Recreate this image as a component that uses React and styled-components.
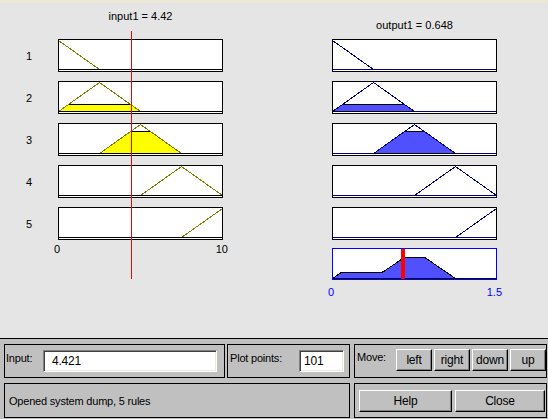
import React from 'react';
import styled, { createGlobalStyle } from 'styled-components';

const GlobalStyle = createGlobalStyle`
  html, body {
    margin: 0;
    padding: 0;
    background: #e5e5e5;
  }
  body {
    font-family: "Liberation Sans", Arial, sans-serif;
  }
`;

const BOX_W = 165;
const BOX_H = 33;
const INPUT = 4.421;
const OUTPUT = 0.648;

const IN_RANGE = [0, 10];
const OUT_RANGE = [0, 1.5];
const IN_MFS = [
  [-2.5, 0, 2.5],
  [0, 2.5, 5],
  [2.5, 5, 7.5],
  [5, 7.5, 10],
  [7.5, 10, 12.5],
];
const OUT_MFS = IN_MFS.map((mf) => mf.map((v) => v * 0.15));

const tri = ([a, b, c], x) => {
  if (x <= a || x >= c) return 0;
  return x < b ? (x - a) / (b - a) : (c - x) / (c - b);
};

const degrees = IN_MFS.map((mf) => tri(mf, INPUT));

const toX = (v, [lo, hi]) => 0.5 + ((v - lo) / (hi - lo)) * (BOX_W - 1);

const sample = (fn, from, to, range, toY, n = 120) => {
  const pts = [];
  for (let i = 0; i <= n; i++) {
    const v = from + ((to - from) * i) / n;
    pts.push(`${toX(v, range).toFixed(1)},${toY(fn(v)).toFixed(1)}`);
  }
  return pts;
};

// ---------- upper plot area ----------

const Window = styled.div`
  width: 548px;
  height: 419px;
  overflow: hidden;
  display: flex;
  flex-direction: column;
  background: #e5e5e5;
`;

const TopEdge = styled.div`
  height: 3px;
  flex: none;
  background: #ece9d8;
`;

const PlotArea = styled.div`
  height: 335px;
  flex: none;
  display: flex;
`;

const LabelColumn = styled.div`
  width: 58px;
  padding-top: 36px;
  display: flex;
  flex-direction: column;
  gap: 9px;
`;

const RowLabel = styled.div`
  height: ${BOX_H}px;
  display: flex;
  align-items: center;
  justify-content: center;
  font-size: 11px;
  color: #000;
`;

const VarColumn = styled.div`
  width: ${BOX_W}px;
  margin-left: ${(p) => p.$offset || 0}px;
  position: relative;
  display: flex;
  flex-direction: column;
`;

const VarTitle = styled.div`
  height: 36px;
  box-sizing: border-box;
  padding-top: ${(p) => p.$top}px;
  text-align: center;
  font-size: 11px;
  line-height: 14px;
  color: #000;
  white-space: nowrap;
`;

const BoxStack = styled.div`
  display: flex;
  flex-direction: column;
  gap: 9px;
`;

const AggregateWrap = styled.div`
  margin-top: 8px;
  height: 32px;
`;

const Axis = styled.div`
  display: flex;
  justify-content: space-between;
  margin: ${(p) => p.$top}px -5px 0 -4px;
  font-size: 11px;
  line-height: 14px;
  color: ${(p) => p.$color};
`;

const Cursor = styled.div`
  position: absolute;
  top: 28px;
  width: 1px;
  height: 248px;
  background: #ff0000;
`;

const PlotSvg = styled.svg`
  display: block;
  background: #fff;
  shape-rendering: crispEdges;
`;

function MfBox({ mf, range, degree, line, fill, baseline }) {
  const toY = (mu) => BOX_H - 2.5 - mu * (BOX_H - 4);
  const from = Math.max(mf[0], range[0]);
  const to = Math.min(mf[2], range[1]);
  const curve = sample((v) => tri(mf, v), from, to, range, toY);
  const clipped = degree > 0
    ? [
        `${toX(from, range).toFixed(1)},${toY(0)}`,
        ...sample((v) => Math.min(tri(mf, v), degree), from, to, range, toY),
        `${toX(to, range).toFixed(1)},${toY(0)}`,
      ]
    : null;
  return (
    <PlotSvg width={BOX_W} height={BOX_H}>
      <line x1="0" x2={BOX_W} y1={toY(0)} y2={toY(0)} stroke={baseline} />
      {clipped && <polygon points={clipped.join(' ')} fill={fill} stroke="#000" />}
      <polyline points={curve.join(' ')} fill="none" stroke={line} />
      {baseline === '#000' && (
        <line x1="0" x2={BOX_W} y1={toY(0)} y2={toY(0)} stroke="#000" />
      )}
      <rect x="0.5" y="0.5" width={BOX_W - 1} height={BOX_H - 1} fill="none" stroke="#000" />
    </PlotSvg>
  );
}

function AggregateBox() {
  const h = 32;
  const toY = (mu) => 30.5 - mu * 28;
  const agg = (v) =>
    Math.max(...OUT_MFS.map((mf, i) => Math.min(tri(mf, v), degrees[i])));
  const pts = [
    `0.5,${toY(0)}`,
    ...sample(agg, OUT_RANGE[0], OUT_RANGE[1], OUT_RANGE, toY, 164),
    `${BOX_W - 0.5},${toY(0)}`,
  ];
  const barX = toX(OUTPUT, OUT_RANGE);
  return (
    <PlotSvg width={BOX_W} height={h}>
      <polygon points={pts.join(' ')} fill="#5050ff" stroke="#000" />
      <line x1="0" x2={BOX_W} y1={toY(0)} y2={toY(0)} stroke="#000" />
      <rect x={Math.round(barX) - 2} y="0" width="4" height={h} fill="#ff0000" />
      <rect x="0.5" y="0.5" width={BOX_W - 1} height={h - 1} fill="none" stroke="#0000ff" />
    </PlotSvg>
  );
}

// ---------- lower control area ----------

const ControlArea = styled.div`
  flex: 1;
  background: #c0c0c0;
  border-top: 1px solid #000;
  box-sizing: border-box;
  padding: 5px 0 0 4px;
  display: flex;
  gap: 4px;
  font-size: 11px;
  letter-spacing: -0.2px;
  color: #000;
`;

const ControlColumn = styled.div`
  width: ${(p) => p.$w}px;
  display: flex;
  flex-direction: column;
  gap: 5px;
`;

const PanelRow = styled.div`
  display: flex;
  gap: 2px;
`;

const Panel = styled.div`
  width: ${(p) => p.$w}px;
  height: ${(p) => p.$h}px;
  box-sizing: border-box;
  border: 1px solid #000;
  padding: ${(p) => p.$pad};
  display: grid;
  grid-template-columns: ${(p) => p.$cols || '1fr'};
  column-gap: ${(p) => p.$gap || 0}px;
  align-items: start;
`;

const StatusPanel = styled.div`
  width: 346px;
  height: 35px;
  box-sizing: border-box;
  border: 1px solid #000;
  padding-left: 4px;
  display: flex;
  align-items: center;
`;

const FieldLabel = styled.span`
  margin-top: 1px;
  line-height: 14px;
  white-space: nowrap;
`;

const Edit = styled.div`
  height: 22px;
  box-sizing: border-box;
  background: #fff;
  border: 1px solid;
  border-color: #808080 #fff #fff #808080;
  box-shadow: inset 1px 1px 0 #404040, inset -1px -1px 0 #ece9d8;
  padding-left: ${(p) => p.$pad}px;
  display: flex;
  align-items: center;
  font-size: 12px;
`;

const Button = styled.button`
  height: 22px;
  box-sizing: border-box;
  padding: 0;
  background: #c0c0c0;
  border: 1px solid;
  border-color: #fff #000 #000 #fff;
  box-shadow: inset -1px -1px 0 #808080;
  font-family: inherit;
  font-size: 12px;
  letter-spacing: -0.2px;
  color: #000;
  cursor: pointer;
`;

export default function App() {
  return (
    <Window>
      <GlobalStyle />
      <TopEdge />
      <PlotArea>
        <LabelColumn>
          {IN_MFS.map((_, i) => (
            <RowLabel key={i}>{i + 1}</RowLabel>
          ))}
        </LabelColumn>

        <VarColumn>
          <VarTitle $top={6}>input1 = 4.42</VarTitle>
          <BoxStack>
            {IN_MFS.map((mf, i) => (
              <MfBox
                key={i}
                mf={mf}
                range={IN_RANGE}
                degree={degrees[i]}
                line="#808000"
                fill="#ffff00"
                baseline="#000"
              />
            ))}
          </BoxStack>
          <Axis $top={2} $color="#000">
            <span>0</span>
            <span>10</span>
          </Axis>
          <Cursor style={{ left: Math.floor(toX(INPUT, IN_RANGE)) }} />
        </VarColumn>

        <VarColumn $offset={109}>
          <VarTitle $top={15}>output1 = 0.648</VarTitle>
          <BoxStack>
            {OUT_MFS.map((mf, i) => (
              <MfBox
                key={i}
                mf={mf}
                range={OUT_RANGE}
                degree={degrees[i]}
                line="#000080"
                fill="#5050ff"
                baseline="#000080"
              />
            ))}
          </BoxStack>
          <AggregateWrap>
            <AggregateBox />
          </AggregateWrap>
          <Axis $top={5} $color="#0000ff">
            <span>0</span>
            <span>1.5</span>
          </Axis>
        </VarColumn>
      </PlotArea>

      <ControlArea>
        <ControlColumn $w={346}>
          <PanelRow>
            <Panel $w={221} $h={34} $pad="5px 0 0 1px" $cols="37px 174px">
              <FieldLabel>Input:</FieldLabel>
              <Edit $pad={8}>4.421</Edit>
            </Panel>
            <Panel $w={123} $h={34} $pad="5px 0 0 2px" $cols="69px 45px">
              <FieldLabel>Plot points:</FieldLabel>
              <Edit $pad={4}>101</Edit>
            </Panel>
          </PanelRow>
          <StatusPanel>Opened system dump, 5 rules</StatusPanel>
        </ControlColumn>

        <ControlColumn $w={193}>
          <Panel $w={193} $h={34} $pad="4px 0 0 2px" $cols="37px repeat(4, 36px)" $gap={2}>
            <FieldLabel>Move:</FieldLabel>
            <Button>left</Button>
            <Button>right</Button>
            <Button>down</Button>
            <Button>up</Button>
          </Panel>
          <Panel $w={193} $h={35} $pad="6px 0 0 4px" $cols="93px 90px" $gap={3}>
            <Button>Help</Button>
            <Button>Close</Button>
          </Panel>
        </ControlColumn>
      </ControlArea>
    </Window>
  );
}
